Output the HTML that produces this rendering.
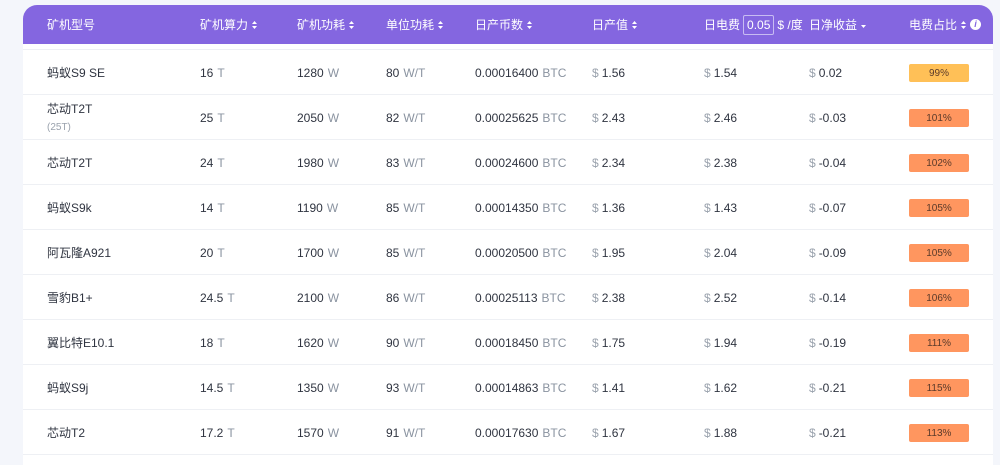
<!DOCTYPE html><html><head><meta charset="utf-8"><style>
body{margin:0;background:#f4f6fb;font-family:"Liberation Sans","Noto Sans CJK SC",sans-serif;width:1000px;height:455px;overflow:hidden}
.card{position:absolute;left:23px;top:5px;width:970px;height:460px;background:#fff;border-radius:14px 14px 0 0}
.hd{height:39px;background:#8466e0;border-radius:14px 14px 0 0;position:relative;color:#fff;font-size:12px}
.hd span{position:absolute;top:0;height:39px;display:flex;align-items:center;white-space:nowrap}
.gap{height:5px;border-bottom:1px solid #eef0f4}
.row{height:44px;border-bottom:1px solid #eef0f4;position:relative;font-size:12px;color:#2f3440}
.row span{position:absolute;top:0;height:45px;display:flex;align-items:center;white-space:nowrap}
.row b{font-weight:normal;color:#8a93a0;margin-left:4px}
.row b.s{margin:0 3px 0 0;color:#9aa2ad}
.b{position:absolute;left:886px;top:14px;width:60px;height:18px;border-radius:2px;background:#ff965f;color:#5a3a2a;font-size:10px;display:flex;align-items:center;justify-content:center}
.sm{font-size:10px;color:#9aa2ad}
svg.ar{margin-left:4px}
</style></head><body><div class="card">
<div class="hd">
<span style="left:24px">矿机型号</span>
<span style="left:177px">矿机算力<svg class="ar" width="5" height="8" viewBox="0 0 5 8"><path d="M2.5 0L5 3H0ZM2.5 8L5 5H0Z" fill="#fff"/></svg></span>
<span style="left:274px">矿机功耗<svg class="ar" width="5" height="8" viewBox="0 0 5 8"><path d="M2.5 0L5 3H0ZM2.5 8L5 5H0Z" fill="#fff"/></svg></span>
<span style="left:363px">单位功耗<svg class="ar" width="5" height="8" viewBox="0 0 5 8"><path d="M2.5 0L5 3H0ZM2.5 8L5 5H0Z" fill="#fff"/></svg></span>
<span style="left:452px">日产币数<svg class="ar" width="5" height="8" viewBox="0 0 5 8"><path d="M2.5 0L5 3H0ZM2.5 8L5 5H0Z" fill="#fff"/></svg></span>
<span style="left:569px">日产值<svg class="ar" width="5" height="8" viewBox="0 0 5 8"><path d="M2.5 0L5 3H0ZM2.5 8L5 5H0Z" fill="#fff"/></svg></span>
<span style="left:681px">日电费<i style="font-style:normal;display:inline-block;border:1px solid #c8bcf2;padding:2px 3px;border-radius:2px;margin:0 3px">0.05</i>$ /度</span>
<span style="left:786px">日净收益<svg class="ar" width="5" height="8" viewBox="0 0 5 8"><path d="M2.5 7L5 4H0Z" fill="#fff"/></svg></span>
<span style="left:886px">电费占比<svg class="ar" width="5" height="8" viewBox="0 0 5 8"><path d="M2.5 0L5 3H0ZM2.5 8L5 5H0Z" fill="#fff"/></svg><i style="margin-left:4px;display:inline-block;width:11px;height:11px;border-radius:50%;background:#fff;color:#8466e0;font-size:9px;text-align:center;line-height:11px;font-weight:bold">i</i></span>
</div>
<div class="gap"></div>
<div class="row"><span style="left:24px">蚂蚁S9 SE</span><span style="left:177px">16<b>T</b></span><span style="left:274px">1280<b>W</b></span><span style="left:363px">80<b>W/T</b></span><span style="left:452px">0.00016400<b>BTC</b></span><span style="left:569px"><b class="s">$</b>1.56</span><span style="left:681px"><b class="s">$</b>1.54</span><span style="left:786px"><b class="s">$</b>0.02</span><div class="b" style="background:#ffc057">99%</div></div>
<div class="row"><span style="left:24px;flex-direction:column;align-items:flex-start;justify-content:center;line-height:20px">芯动T2T<i class="sm" style="font-style:normal;line-height:18px">(25T)</i></span><span style="left:177px">25<b>T</b></span><span style="left:274px">2050<b>W</b></span><span style="left:363px">82<b>W/T</b></span><span style="left:452px">0.00025625<b>BTC</b></span><span style="left:569px"><b class="s">$</b>2.43</span><span style="left:681px"><b class="s">$</b>2.46</span><span style="left:786px"><b class="s">$</b>-0.03</span><div class="b">101%</div></div>
<div class="row"><span style="left:24px">芯动T2T</span><span style="left:177px">24<b>T</b></span><span style="left:274px">1980<b>W</b></span><span style="left:363px">83<b>W/T</b></span><span style="left:452px">0.00024600<b>BTC</b></span><span style="left:569px"><b class="s">$</b>2.34</span><span style="left:681px"><b class="s">$</b>2.38</span><span style="left:786px"><b class="s">$</b>-0.04</span><div class="b">102%</div></div>
<div class="row"><span style="left:24px">蚂蚁S9k</span><span style="left:177px">14<b>T</b></span><span style="left:274px">1190<b>W</b></span><span style="left:363px">85<b>W/T</b></span><span style="left:452px">0.00014350<b>BTC</b></span><span style="left:569px"><b class="s">$</b>1.36</span><span style="left:681px"><b class="s">$</b>1.43</span><span style="left:786px"><b class="s">$</b>-0.07</span><div class="b">105%</div></div>
<div class="row"><span style="left:24px">阿瓦隆A921</span><span style="left:177px">20<b>T</b></span><span style="left:274px">1700<b>W</b></span><span style="left:363px">85<b>W/T</b></span><span style="left:452px">0.00020500<b>BTC</b></span><span style="left:569px"><b class="s">$</b>1.95</span><span style="left:681px"><b class="s">$</b>2.04</span><span style="left:786px"><b class="s">$</b>-0.09</span><div class="b">105%</div></div>
<div class="row"><span style="left:24px">雪豹B1+</span><span style="left:177px">24.5<b>T</b></span><span style="left:274px">2100<b>W</b></span><span style="left:363px">86<b>W/T</b></span><span style="left:452px">0.00025113<b>BTC</b></span><span style="left:569px"><b class="s">$</b>2.38</span><span style="left:681px"><b class="s">$</b>2.52</span><span style="left:786px"><b class="s">$</b>-0.14</span><div class="b">106%</div></div>
<div class="row"><span style="left:24px">翼比特E10.1</span><span style="left:177px">18<b>T</b></span><span style="left:274px">1620<b>W</b></span><span style="left:363px">90<b>W/T</b></span><span style="left:452px">0.00018450<b>BTC</b></span><span style="left:569px"><b class="s">$</b>1.75</span><span style="left:681px"><b class="s">$</b>1.94</span><span style="left:786px"><b class="s">$</b>-0.19</span><div class="b">111%</div></div>
<div class="row"><span style="left:24px">蚂蚁S9j</span><span style="left:177px">14.5<b>T</b></span><span style="left:274px">1350<b>W</b></span><span style="left:363px">93<b>W/T</b></span><span style="left:452px">0.00014863<b>BTC</b></span><span style="left:569px"><b class="s">$</b>1.41</span><span style="left:681px"><b class="s">$</b>1.62</span><span style="left:786px"><b class="s">$</b>-0.21</span><div class="b">115%</div></div>
<div class="row"><span style="left:24px">芯动T2</span><span style="left:177px">17.2<b>T</b></span><span style="left:274px">1570<b>W</b></span><span style="left:363px">91<b>W/T</b></span><span style="left:452px">0.00017630<b>BTC</b></span><span style="left:569px"><b class="s">$</b>1.67</span><span style="left:681px"><b class="s">$</b>1.88</span><span style="left:786px"><b class="s">$</b>-0.21</span><div class="b">113%</div></div>
</div></body></html>
